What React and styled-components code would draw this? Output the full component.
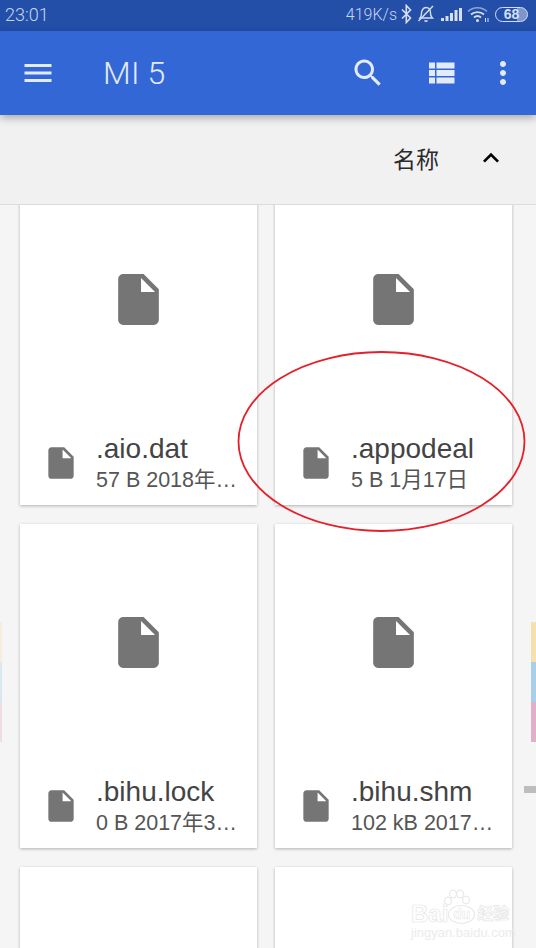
import React from 'react';
import styled, { createGlobalStyle } from 'styled-components';

const GlobalStyle = createGlobalStyle`
  html, body {
    margin: 0;
    padding: 0;
    background: #f5f5f5;
  }
  * { box-sizing: border-box; }
`;

const FONT = `"Liberation Sans", "Noto Sans CJK SC", sans-serif`;

const Phone = styled.div`
  position: relative;
  width: 536px;
  height: 948px;
  overflow: hidden;
  display: flex;
  flex-direction: column;
  background: #f5f5f5;
  font-family: ${FONT};
`;

const StatusBar = styled.div`
  height: 31px;
  flex: none;
  display: flex;
  align-items: center;
  padding: 0 8px 3px 5px;
  background: #234fa8;
  color: #c9d5ee;
  font-size: 18px;
`;

const Clock = styled.span`
  font-family: "Roboto", sans-serif;
  font-weight: 300;
  font-size: 18px;
  margin-right: auto;
`;

const Speed = styled.span`
  font-family: "Roboto", sans-serif;
  font-weight: 300;
  font-size: 16px;
  margin-right: 4px;
`;

const StatusIcon = styled.svg`
  display: block;
  flex: none;
  margin-left: ${props => props.$gap || 0}px;
`;

const Battery = styled.div`
  width: 33px;
  height: 15px;
  margin-left: 6px;
  border: 1.5px solid #d5deF2;
  border-radius: 8px;
  display: flex;
  align-items: center;
  justify-content: center;
  background: linear-gradient(90deg, transparent 0 68%, rgba(213, 222, 242, 0.5) 68% 100%);
  font-size: 14px;
  font-weight: 700;
  line-height: 1;
  color: #d5def2;
`;

const Toolbar = styled.header`
  position: relative;
  z-index: 2;
  height: 84px;
  flex: none;
  display: flex;
  align-items: center;
  background: #3367d6;
  box-shadow: 0 3px 8px rgba(0, 0, 0, 0.3);
  color: #e3eafa;
`;

const Title = styled.h1`
  margin: 0 0 0 47px;
  font-family: "Roboto", sans-serif;
  font-weight: 300;
  font-size: 32px;
  letter-spacing: 0.2px;
  flex: 1;
`;

const ToolIcon = styled.svg`
  display: block;
  flex: none;
  margin-left: ${props => props.$gap || 0}px;
  margin-right: ${props => props.$end || 0}px;
  fill: currentColor;
`;

const SortBar = styled.div`
  height: 90px;
  flex: none;
  display: flex;
  align-items: center;
  justify-content: flex-end;
  padding: 0 29px 3px 0;
  background: #f1f1f1;
  border-bottom: 1px solid #dcdcdc;
`;

const SortLabel = styled.span`
  font-size: 23px;
  color: #2b2b2b;
  margin-right: 36px;
`;

const Scroller = styled.div`
  flex: 1;
  min-height: 0;
  overflow: hidden;
`;

const Grid = styled.div`
  display: grid;
  grid-template-columns: 237px 237px;
  grid-auto-rows: 324px;
  column-gap: 18px;
  row-gap: 19px;
  margin-top: -24px;
  padding-left: 20px;
`;

const Card = styled.div`
  display: flex;
  flex-direction: column;
  background: #fff;
  box-shadow: 0 1px 3px rgba(0, 0, 0, 0.28);
`;

const Preview = styled.div`
  height: 251px;
  flex: none;
  display: flex;
  justify-content: center;
  padding-top: 88px;
`;

const FileIcon = styled.svg`
  display: block;
  flex: none;
  fill: #757575;
`;

const Meta = styled.div`
  display: flex;
  align-items: center;
  padding-left: 22px;
`;

const MetaText = styled.div`
  min-width: 0;
  margin-left: 16px;
`;

const Name = styled.div`
  font-size: 28px;
  line-height: 34px;
  color: #444;
`;

const Detail = styled.div`
  font-size: 21.5px;
  line-height: 28px;
  color: #555;
  white-space: nowrap;
`;

const Annotation = styled.svg`
  position: absolute;
  left: 236px;
  top: 350px;
  pointer-events: none;
`;

const EdgeStrip = styled.div`
  position: absolute;
  top: 622px;
  width: ${props => props.$width}px;
  height: 120px;
  ${props => (props.$right ? 'right: 0;' : 'left: 0;')}
  opacity: ${props => props.$opacity};
  background: linear-gradient(#f5e0b0 0 40px, #a8cfe8 40px 80px, #e3aec8 80px 120px);
`;

const ScrollThumb = styled.div`
  position: absolute;
  right: 0;
  top: 786px;
  width: 12px;
  height: 7px;
  background: #bdbdbd;
`;

const Watermark = styled.div`
  position: absolute;
  left: 411px;
  top: 889px;
  width: 100px;
  color: #fff;
  -webkit-text-stroke: 0.7px #e6e6e6;
`;

const Paw = styled.svg`
  display: block;
  margin: 0 0 -3px 31px;
`;

const MarkRow = styled.div`
  display: flex;
  align-items: center;
  font-size: 24px;
  font-weight: 700;
  line-height: 20px;
  white-space: nowrap;
`;

const DuOval = styled.span`
  width: 27px;
  height: 19px;
  margin: 0 2px 0 0;
  display: flex;
  align-items: center;
  justify-content: center;
  border: 1px solid #e6e6e6;
  border-radius: 50%;
  font-size: 14px;
  -webkit-text-stroke: 0.5px #e6e6e6;
`;

const MarkCn = styled.span`
  font-size: 16px;
`;

const MarkUrl = styled.div`
  font-size: 13px;
  line-height: 14px;
  margin-top: 2px;
  -webkit-text-stroke: 0;
  color: #ebebeb;
  white-space: nowrap;
`;

const FILE_PATH = 'M6 2c-1.1 0-1.99.9-1.99 2L4 20c0 1.1.89 2 1.99 2H18c1.1 0 2-.9 2-2V8l-6-6H6zm7 7V3.5L18.5 9H13z';

const files = [
  { name: '.aio.dat', detail: '57 B 2018年…' },
  { name: '.appodeal', detail: '5 B 1月17日' },
  { name: '.bihu.lock', detail: '0 B 2017年3…' },
  { name: '.bihu.shm', detail: '102 kB 2017…' },
  { name: '', detail: '' },
  { name: '', detail: '' },
];

const File = ({ size, ...rest }) => (
  <FileIcon width={size} height={size} viewBox="0 0 24 24" {...rest}>
    <path d={FILE_PATH} fillRule="evenodd" />
  </FileIcon>
);

const StatusIcons = () => (
  <>
    <StatusIcon width="11" height="20" viewBox="0 0 11 20" fill="none" stroke="#d5def2" strokeWidth="1.6">
      <path d="M1 5.5l8.5 8.5-4.2 4.5V1.5L9.5 6 1 14.5" />
    </StatusIcon>
    <StatusIcon $gap={5} width="18" height="20" viewBox="0 0 18 20" fill="none" stroke="#d5def2" strokeWidth="1.4">
      <path d="M3 14c1.5-1.5 1.5-3 1.5-5S6 3.500 9 3.500s4.500 2 4.500 5.500 .5 3.500 2 5H3z" />
      <path d="M7.500 16.500c.8 1 2.200 1 3 0" />
      <path d="M1.500 17L16 2" />
    </StatusIcon>
    <StatusIcon $gap={6} width="21" height="16" viewBox="0 0 21 16" fill="#d5def2">
      <rect x="0" y="12" width="3" height="3" />
      <rect x="4.500" y="10" width="3" height="5" />
      <rect x="9" y="7" width="3" height="8" />
      <rect x="13.500" y="4" width="3" height="11" />
      <rect x="18" y="2" width="3" height="13" />
    </StatusIcon>
    <StatusIcon $gap={5} width="22" height="18" viewBox="0 0 22 18" fill="none" stroke="#d5def2">
      <path d="M1 6.500C6 1.500 15 1.500 20 6.500" strokeWidth="1.5" opacity="0.6" />
      <path d="M4 9.500c3.500-3.300 9.500-3.300 13 0" strokeWidth="1.8" />
      <path d="M7 12.500c2-1.700 5-1.700 7 0" strokeWidth="1.8" />
      <circle cx="10.500" cy="15.500" r="1.500" fill="#d5def2" stroke="none" />
      <path d="M18.500 13v4M21 13v4" strokeWidth="1" />
    </StatusIcon>
  </>
);

export default function App() {
  return (
    <Phone>
      <GlobalStyle />
      <StatusBar>
        <Clock>23:01</Clock>
        <Speed>419K/s</Speed>
        <StatusIcons />
        <Battery>68</Battery>
      </StatusBar>
      <Toolbar>
        <ToolIcon $gap={20} width="36" height="36" viewBox="0 0 24 24">
          <path d="M3 18h18v-2H3v2zm0-5h18v-2H3v2zm0-7v2h18V6H3z" />
        </ToolIcon>
        <Title>MI 5</Title>
        <ToolIcon width="36" height="36" viewBox="0 0 24 24">
          <path d="M15.500 14h-.79l-.28-.27C15.410 12.590 16 11.110 16 9.500 16 5.910 13.090 3 9.500 3S3 5.910 3 9.500 5.910 16 9.500 16c1.610 0 3.090-.59 4.230-1.570l.27.28v.79l5 4.990L20.490 19l-4.990-5zm-6 0C7.010 14 5 11.990 5 9.500S7.010 5 9.500 5 14 7.010 14 9.500 11.990 14 9.500 14z" />
        </ToolIcon>
        <ToolIcon $gap={37} width="36" height="36" viewBox="0 0 24 24">
          <path d="M4 14h4v-4H4v4zm0 5h4v-4H4v4zM4 9h4V5H4v4zm5 5h12v-4H9v4zm0 5h12v-4H9v4zM9 5v4h12V5H9z" />
        </ToolIcon>
        <ToolIcon $gap={26} $end={15} width="36" height="36" viewBox="0 0 24 24">
          <path d="M12 8c1.100 0 2-.9 2-2s-.9-2-2-2-2 .9-2 2 .9 2 2 2zm0 2c-1.100 0-2 .9-2 2s.9 2 2 2 2-.9 2-2-.9-2-2-2zm0 6c-1.100 0-2 .9-2 2s.9 2 2 2 2-.9 2-2-.9-2-2-2z" />
        </ToolIcon>
      </Toolbar>
      <SortBar>
        <SortLabel>名称</SortLabel>
        <svg width="32" height="32" viewBox="0 0 24 24" fill="#000">
          <path d="M12 8l-6 6 1.410 1.410L12 10.830l4.590 4.580L18 14z" />
        </svg>
      </SortBar>
      <Scroller>
        <Grid>
          {files.map((file, i) => (
            <Card key={i}>
              <Preview><File size={61} /></Preview>
              {file.name && (
                <Meta>
                  <File size={38} />
                  <MetaText>
                    <Name>{file.name}</Name>
                    <Detail>{file.detail}</Detail>
                  </MetaText>
                </Meta>
              )}
            </Card>
          ))}
        </Grid>
      </Scroller>
      <EdgeStrip $width={2} $opacity={0.35} />
      <EdgeStrip $width={5} $opacity={1} $right />
      <ScrollThumb />
      <Annotation width="292" height="184" viewBox="0 0 292 184" fill="none">
        <ellipse cx="145.500" cy="91.500" rx="143" ry="89.500" stroke="#e5202a" strokeWidth="1.800" />
      </Annotation>
      <Watermark>
        <Paw width="30" height="18" viewBox="0 0 30 18" fill="#fff" stroke="#e6e6e6">
          <ellipse cx="6" cy="12" rx="3.500" ry="4" />
          <ellipse cx="11" cy="5" rx="3.500" ry="4" />
          <ellipse cx="18" cy="5" rx="3.500" ry="4" />
          <ellipse cx="24" cy="11" rx="3.500" ry="4" />
        </Paw>
        <MarkRow>Bai<DuOval>du</DuOval><MarkCn>经验</MarkCn></MarkRow>
        <MarkUrl>jingyan.baidu.com</MarkUrl>
      </Watermark>
    </Phone>
  );
}
